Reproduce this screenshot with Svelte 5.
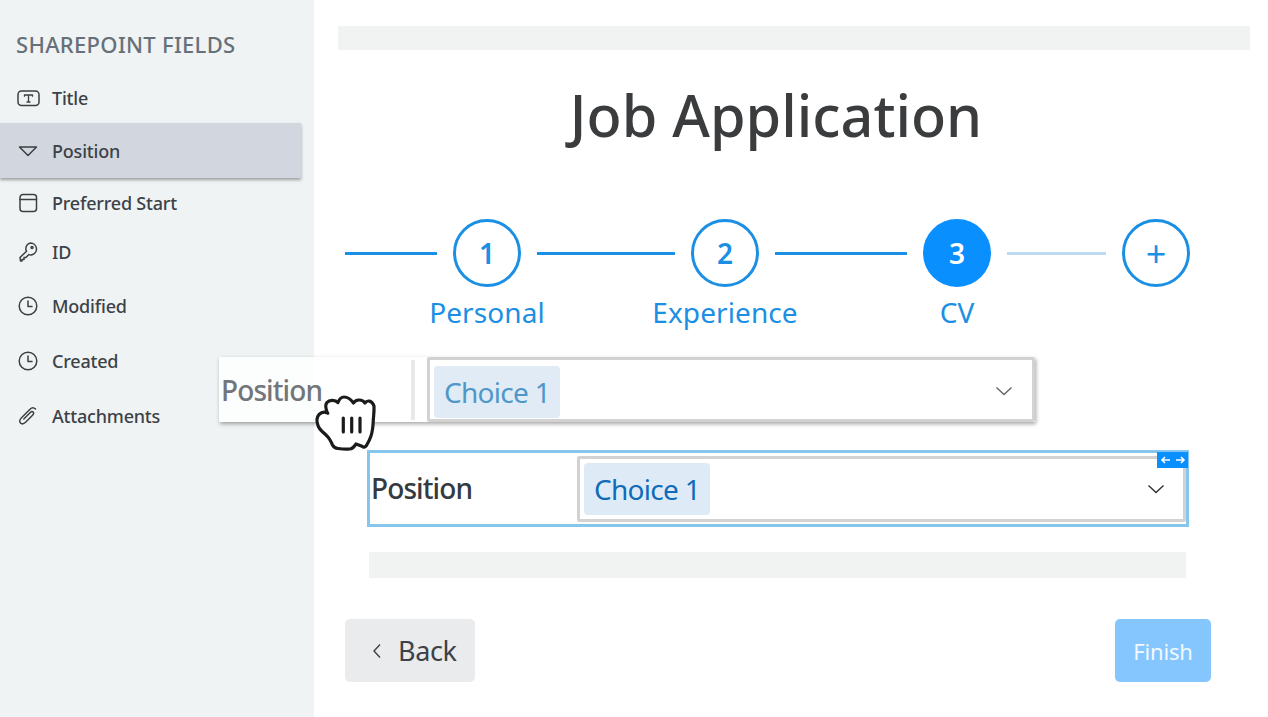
<script>
  const fields = [
    { name: 'Title', icon: 'text' },
    { name: 'Position', icon: 'choice', active: true },
    { name: 'Preferred Start', icon: 'date' },
    { name: 'ID', icon: 'key' },
    { name: 'Modified', icon: 'clock' },
    { name: 'Created', icon: 'clock' },
    { name: 'Attachments', icon: 'clip' }
  ]
  const steps = [
    { line: 92, label: 'Personal', text: '1' },
    { line: 138, label: 'Experience', text: '2' },
    { line: 132, label: 'CV', text: '3', current: true },
    { line: 99, text: '+', pending: true }
  ]
</script>

<div class="page">
  <aside class="sidebar">
    <h2>SHAREPOINT FIELDS</h2>
    <ul>
      {#each fields as field}
        <li class:active={field.active}>
          <svg viewBox="0 0 24 24" width="24" height="24" fill="none" stroke="#3c4043" stroke-width="1.5" stroke-linecap="round" stroke-linejoin="round">
            {#if field.icon === 'text'}
              <rect x="2" y="5" width="21" height="14.5" rx="3.5" />
              <path d="M8.500 9h8M12.500 9v7M8.500 9v1.200M16.500 9v1.200M11 16h3" stroke-width="1.300" />
            {:else if field.icon === 'choice'}
              <path d="M3.500 8h17L12 16.500z" />
            {:else if field.icon === 'date'}
              <rect x="4" y="3.500" width="16.500" height="17" rx="3" />
              <path d="M4 8.500h16.500" />
            {:else if field.icon === 'key'}
              <path d="M14.500 3a6 6 0 0 1 1.500 11.800c-1.200 .3-2.200 .2-3.200-.2L10 17.500H8v2H6V21H4.500L4 17.500l6.500-6.300c-.6-1-.8-2-.6-3.200A6 6 0 0 1 14.500 3z" />
              <circle cx="16" cy="7.500" r="1" />
            {:else if field.icon === 'clock'}
              <circle cx="12" cy="12" r="8.800" />
              <path d="M12 7v5.500h4" />
            {:else}
              <path d="M19.500 5c-1.700-1.700-4-1.300-5.500 .2L5.500 13.700c-2 2-2.300 4-1 5.300s3.300 1 5.300-1l7-7c1-1 1.100-2.200 .4-2.900s-1.900-.6-2.900 .4l-6.500 6.500" />
            {/if}
          </svg>
          <span>{field.name}</span>
        </li>
      {/each}
    </ul>
  </aside>

  <main>
    <div class="placeholder top"></div>
    <h1>Job Application</h1>

    <div class="stepper">
      {#each steps as step}
        <div class="line" class:faded={step.pending} style="width: {step.line}px"></div>
        <div class="step">
          <div class="circle" class:current={step.current} class:plus={step.pending}>{step.text}</div>
          {#if step.label}<div class="step-label">{step.label}</div>{/if}
        </div>
      {/each}
    </div>

    <div class="selected">
      <div class="field-name">Position</div>
      <div class="select">
        <span class="chip">Choice 1</span>
        <svg class="chev" viewBox="0 0 18 10" width="18" height="10" fill="none" stroke="#333" stroke-width="1.400"><path d="M1.500 1.500 9 8.500l7.500-7" /></svg>
      </div>
      <div class="handle">
        <svg viewBox="0 0 26 10" width="26" height="10" fill="none" stroke="#fff" stroke-width="1.600"><path d="M10 5H2M5 2 2 5l3 3M16 5h8M21 2l3 3-3 3" /></svg>
      </div>
    </div>

    <div class="placeholder bottom"></div>

    <div class="actions">
      <button class="back">
        <svg viewBox="0 0 10 16" width="10" height="16" fill="none" stroke="#3c4043" stroke-width="1.400"><path d="M8 1.500 2 8l6 6.500" /></svg>
        Back
      </button>
      <button class="finish">Finish</button>
    </div>
  </main>

  <div class="ghost">
    <div class="ghost-name">Position</div>
    <div class="ghost-bar"></div>
    <div class="select small">
      <span class="chip">Choice 1</span>
      <svg class="chev" viewBox="0 0 18 10" width="18" height="10" fill="none" stroke="#666" stroke-width="1.400"><path d="M1.500 1.500 9 8.500l7.500-7" /></svg>
    </div>
  </div>

  <svg class="hand" viewBox="0 0 72 64" width="72" height="64" fill="#fff" stroke="#1b1b1b" stroke-width="3.200" stroke-linejoin="round" stroke-linecap="round">
    <path d="M17.300 22.700C15.500 18 15.500 14 17 12.500c2-2.500 8-3 11 0 1.500-4 3-5.500 6-5.500 4 0 7 2.500 9.500 6 2-3.500 8.500-4.500 11.500 0 2-3 7-3 9 3 .3 6-.5 10-.7 14-.3 8-1.300 13-2.300 16-1 3-2.500 6-4.500 9.500-1.500 2-3 2-4.500 .7L46 54c-1.500 2-3 5-6 5-4 .3-8 0-12-.5-2.500-.3-4.500-1.500-5.500-3.500-1.500-3.500-3-7-6-9.500-3-3-7.500-6-8.500-10-1.500-4-1.500-8 1-11 2.500-2.500 6-3 8.800-1.300z" />
    <path d="M33.300 28v14M41.700 28v14M50 28v14" />
  </svg>
</div>

<style>
  :global(body) {
    margin: 0;
    background: #fff;
    font-family: "Noto Sans", "Open Sans", sans-serif;
    color: #343a40;
  }

  .page {
    position: relative;
    display: flex;
    width: 1268px;
    height: 717px;
    overflow: hidden;
  }

  .sidebar {
    flex: 0 0 314px;
    background: #f0f3f4;
    box-sizing: border-box;
    padding-top: 31px;
  }

  h2 {
    margin: 0 0 0 16px;
    font-size: 22px;
    line-height: 26px;
    font-weight: 500;
    color: #667079;
    letter-spacing: 0.3px;
  }

  ul {
    list-style: none;
    margin: 27px 0 0;
    padding: 0;
  }

  li {
    display: flex;
    align-items: center;
    gap: 12px;
    height: 28px;
    padding-left: 16px;
    font-size: 18px;
    font-weight: 500;
    color: #3c4248;
    letter-spacing: -0.2px;
    margin-bottom: 27px;
  }

  li:nth-child(2) { margin-top: -16px; margin-bottom: 11px; height: 55px; }
  li:nth-child(3) { margin-bottom: 21px; }
  li:nth-child(4) { margin-bottom: 26px; }

  li.active {
    width: 285px;
    background: #d2d7df;
    box-shadow: 0 2px 3px rgba(0, 0, 0, 0.35);
  }

  main {
    flex: 1;
    min-width: 0;
    box-sizing: border-box;
    padding: 26px 18px 0 24px;
  }

  .placeholder {
    background: #f1f3f3;
  }

  .top {
    height: 24px;
  }

  h1 {
    margin: 28px 0 0;
    padding-right: 36px;
    text-align: center;
    font-size: 57.5px;
    line-height: 74px;
    font-weight: 500;
    color: #3a3c3e;
  }

  .stepper {
    display: flex;
    align-items: flex-start;
    gap: 16px;
    margin: 67px 0 0 7px;
    height: 120px;
  }

  .line {
    height: 3px;
    margin-top: 33px;
    background: #1a8fe3;
  }

  .line.faded {
    background: #bdd9f2;
  }

  .step {
    display: flex;
    flex-direction: column;
    align-items: center;
    width: 68px;
  }

  .circle {
    flex: none;
    box-sizing: border-box;
    width: 68px;
    height: 68px;
    border: 3px solid #1a8fe3;
    border-radius: 50%;
    display: flex;
    align-items: center;
    justify-content: center;
    font-size: 28px;
    font-weight: 600;
    color: #1a8fe3;
  }

  .circle.current {
    background: #0a8fff;
    border-color: #0a8fff;
    color: #fff;
  }

  .circle.plus {
    font-weight: 400;
    font-size: 36px;
  }

  .step-label {
    margin-top: 6px;
    font-size: 28px;
    line-height: 38px;
    white-space: nowrap;
    color: #1a8fe3;
    letter-spacing: 0.1px;
  }

  .selected {
    position: relative;
    display: flex;
    align-items: center;
    box-sizing: border-box;
    width: 822px;
    height: 77px;
    margin: 111px 0 0 29px;
    border: 3px solid #86c6ec;
  }

  .field-name {
    flex: 0 0 207px;
    padding: 0 0 2px 1px;
    box-sizing: border-box;
    font-size: 28px;
    font-weight: 500;
    color: #343a40;
    letter-spacing: -0.9px;
  }

  .select {
    flex: 1;
    display: flex;
    align-items: center;
    justify-content: space-between;
    box-sizing: border-box;
    height: 66px;
    padding: 4px 18px 4px 4px;
    border: 3px solid #d2d2d2;
    border-radius: 2px;
    background: #fff;
  }

  .chip {
    display: flex;
    align-items: center;
    height: 52px;
    padding: 0 10px;
    border-radius: 4px;
    background: #deebf7;
    color: #0f6cb8;
    font-size: 28px;
    letter-spacing: -0.7px;
  }

  .handle {
    position: absolute;
    top: -1px;
    right: -2px;
    width: 31px;
    height: 16px;
    display: flex;
    align-items: center;
    justify-content: center;
    background: #0a8fff;
  }

  .bottom {
    height: 26px;
    width: 817px;
    margin: 25px 0 0 31px;
  }

  .actions {
    display: flex;
    justify-content: space-between;
    width: 866px;
    margin: 41px 0 0 7px;
  }

  button {
    height: 63px;
    border: none;
    border-radius: 5px;
    font-family: inherit;
    font-size: 28px;
    display: flex;
    align-items: center;
    justify-content: center;
  }

  .back {
    width: 130px;
    justify-content: flex-start;
    gap: 16px;
    padding: 0 0 0 27px;
    background: #e9ebed;
    color: #3c4248;
    font-size: 27px;
    letter-spacing: -0.4px;
  }

  .finish {
    width: 96px;
    background: #86c6ff;
    color: #f2f9ff;
    font-size: 22px;
    letter-spacing: -0.2px;
  }

  /* the field being dragged, floats above sidebar and form */
  .ghost {
    position: absolute;
    left: 219px;
    top: 357px;
    width: 816px;
    height: 65px;
    display: flex;
    align-items: center;
    background: rgba(255, 255, 255, 0.8);
    box-shadow: 1px 2px 4px rgba(0, 0, 0, 0.35);
  }

  .ghost-name {
    flex: 0 0 192px;
    padding-left: 2px;
    box-sizing: border-box;
    font-size: 28px;
    font-weight: 500;
    color: #72767a;
    letter-spacing: -0.9px;
  }

  .ghost-bar {
    flex: 0 0 4px;
    height: 60px;
    margin-right: 12px;
    background: #e9e9e9;
  }

  .select.small {
    height: 65px;
    padding-right: 19px;
  }

  .small .chip {
    margin-top: 4px;
    color: #4f97c9;
    background: #e0ebf6;
  }

  .small .chev {
    margin-top: 2px;
  }

  .hand {
    position: absolute;
    left: 310px;
    top: 390px;
  }
</style>
